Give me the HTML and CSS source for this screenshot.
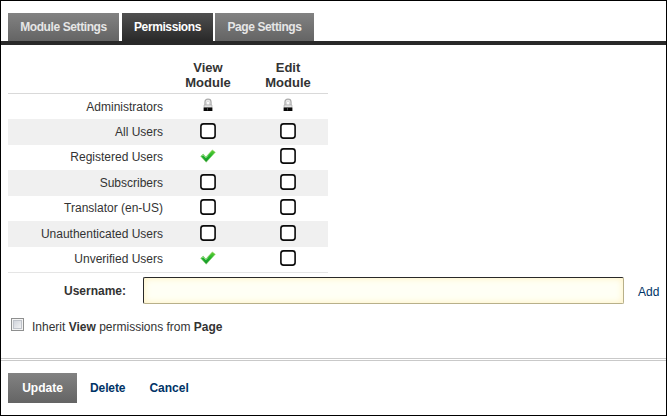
FILE: index.html
```html
<!DOCTYPE html>
<html lang="en">
<head>
<meta charset="utf-8">
<title>Permissions</title>
<link rel="stylesheet" href="styles.css">
</head>
<body>
<svg class="defs" aria-hidden="true">
  <defs>
    <linearGradient id="green" x1="0" y1="0" x2="0" y2="1"><stop offset="0" stop-color="#65ce32"/><stop offset=".5" stop-color="#20b52c"/><stop offset="1" stop-color="#16902c"/></linearGradient>
    <symbol id="lock" viewBox="0 0 10 14">
      <path d="M2 9V4Q2 1.2 5 1.2Q8 1.2 8 4V9" fill="#f6f6f6" stroke="#aaa" stroke-width="1.3"/>
      <path d="M3.6 7V4.4Q3.6 3 5 3Q6.4 3 6.4 4.4V7Z" fill="#fff" stroke="#bbb" stroke-width=".6"/>
      <path d="M1 7H9V9.5H1Z" fill="#e4e4e4" stroke="#999" stroke-width=".5"/>
      <path d="M.6 9.5H9.4V13H.6Z" fill="#080808"/>
      <path d="M4.5 9.8V12.4" stroke="#666" stroke-width=".7"/>
    </symbol>
    <symbol id="check" viewBox="0 0 16 14">
      <path d="M.7 7.2L3.2 5.1L5.9 8.1L12.3.9L15.3 3.2L6.2 13.2Z" fill="url(#green)" stroke="#92d46c" stroke-width=".6"/>
      <path d="M1.6 7L3.2 5.9L5.9 8.8L8 6.6" fill="none" stroke="#a5df9e" stroke-width=".8"/>
    </symbol>
    <symbol id="box" viewBox="0 0 16 16"><rect x=".9" y=".9" width="14.2" height="14.2" rx="2.6" fill="#fff" stroke="#0b0b0b" stroke-width="1.6"/></symbol>
  </defs>
</svg>
<main class="dialog">
  <nav class="tabs">
    <a class="tab tab-module">Module Settings</a>
    <a class="tab tab-permissions active">Permissions</a>
    <a class="tab tab-page">Page Settings</a>
  </nav>
  <section class="grid">
    <div class="row head"><span></span><b>View<br>Module</b><b>Edit<br>Module</b></div>
    <div class="row first"><span>Administrators</span><svg class="lock"><use href="#lock"/></svg><svg class="lock"><use href="#lock"/></svg></div>
    <div class="row alt"><span>All Users</span><svg class="box"><use href="#box"/></svg><svg class="box"><use href="#box"/></svg></div>
    <div class="row"><span>Registered Users</span><svg class="check"><use href="#check"/></svg><svg class="box"><use href="#box"/></svg></div>
    <div class="row alt"><span>Subscribers</span><svg class="box"><use href="#box"/></svg><svg class="box"><use href="#box"/></svg></div>
    <div class="row"><span>Translator (en-US)</span><svg class="box"><use href="#box"/></svg><svg class="box"><use href="#box"/></svg></div>
    <div class="row alt"><span>Unauthenticated Users</span><svg class="box"><use href="#box"/></svg><svg class="box"><use href="#box"/></svg></div>
    <div class="row"><span>Unverified Users</span><svg class="check"><use href="#check"/></svg><svg class="box"><use href="#box"/></svg></div>
  </section>
  <div class="user"><label for="username">Username:</label><input id="username" type="text"><a>Add</a></div>
  <label class="inherit"><input type="checkbox"><span>Inherit <b>View</b> permissions from <b>Page</b></span></label>
  <div class="actions"><button class="update">Update</button><a class="delete">Delete</a><a>Cancel</a></div>
</main>
</body>
</html>
```
FILE: styles.css
```css
* { box-sizing: border-box; }
body { margin: 0; font: 12px/14px "Liberation Sans", Arial, sans-serif; color: #333; background: #fff; }
.defs { position: absolute; width: 0; height: 0; }
.dialog { width: 667px; height: 416px; border: 1px solid #000; overflow: hidden; }
.tabs { display: flex; height: 44px; padding: 12px 0 0 7px; border-bottom: 4px solid #292929; }
.tab { height: 28px; color: #e6e6e6; font-weight: bold; line-height: 28px; letter-spacing: -.4px; text-align: center; background: linear-gradient(#828282, #646464); }
.tab-module { width: 111px; margin-right: 3px; }
.tab-permissions { width: 91px; margin-right: 2px; }
.tab-page { width: 99px; }
.tab.active { color: #fff; background: linear-gradient(#505050, #292929); }
.grid { width: 320px; margin: 0 0 0 7px; padding-top: 14px; border-bottom: 1px solid #e5e5e5; }
.row { display: grid; grid-template-columns: 160px 80px 80px; height: 25px; align-items: start; justify-items: center; padding-top: 3px; }
.row > span { justify-self: end; padding: 2px 5px 0 0; }
.row.alt { height: 26px; background: #f0f0f0; padding-top: 4px; }
.row.first > span { padding-top: 3px; }
.row.head { height: 35px; padding-top: 1px; font-size: 13px; line-height: 15px; border-bottom: 1px solid #d9d9d9; text-align: center; }
.box { width: 16px; height: 16px; }
.lock { width: 10px; height: 14px; margin-top: 1px; }
.check { width: 16px; height: 14px; margin-top: 1px; }
.user { display: flex; align-items: center; height: 27px; margin-top: 4px; }
.user label { width: 142px; padding-right: 17px; text-align: right; font-weight: bold; }
.user input { width: 481px; height: 27px; margin: 0; padding: 3px 5px; border: 1px solid; border-color: #292929 #b8b08a #b8b08a #292929; border-radius: 2px; background: #fffff5; box-shadow: inset 0 0 7px #fff0bd; }
.user a { margin-left: 14px; padding-top: 3px; }
a { color: #003366; }
.inherit { display: flex; align-items: center; height: 14px; margin: 16px 0 0 10px; }
.inherit input { appearance: none; width: 13px; height: 13px; margin: -6px 8px 0 0; border: 1px solid #8e8f8f; background: linear-gradient(135deg, #c8ccd5, #fafafa); box-shadow: inset 0 0 0 1px #f4f4f4, inset 0 0 0 2px #bfc3ca; }
.actions { display: flex; align-items: center; height: 57px; margin-top: 24px; padding: 0 0 0 7px; border-top: 3px double #c9c9c9; font-weight: bold; }
.update { width: 69px; height: 30px; padding: 0; margin-right: 13px; border: 0; color: #fff; font: bold 12px/29px "Liberation Sans", Arial, sans-serif; background: linear-gradient(#828282, #646464); }
.delete { margin-right: 24px; letter-spacing: -.1px; }
```
